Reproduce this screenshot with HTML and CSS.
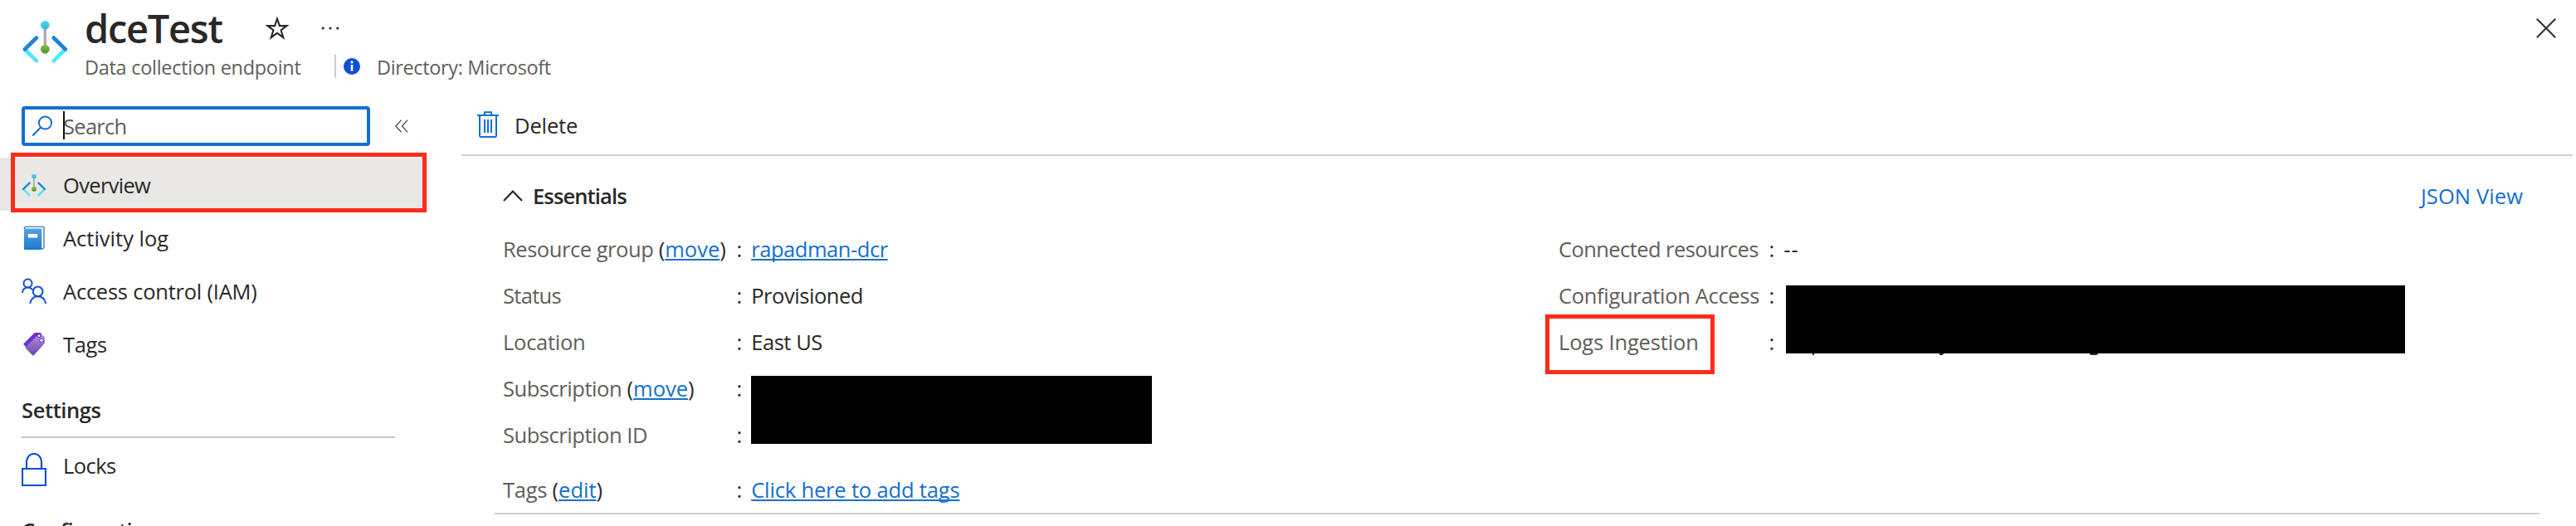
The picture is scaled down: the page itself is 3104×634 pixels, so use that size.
FILE: index.html
```
<!DOCTYPE html>
<html lang="en">
<head>
<meta charset="utf-8">
<title>dceTest</title>
<link rel="stylesheet" href="styles.css">
</head>
<body>
<svg class="defs" aria-hidden="true">
  <defs>
    <linearGradient id="cyan" x1="0" y1="0" x2="0" y2="1"><stop offset="0" stop-color="#4ad6f2"/><stop offset="1" stop-color="#3cb8dc"/></linearGradient>
    <linearGradient id="green" x1="0" y1="0" x2="0" y2="1"><stop offset="0" stop-color="#7cc43e"/><stop offset="1" stop-color="#53912d"/></linearGradient>
    <linearGradient id="book" x1="0" y1="0" x2="0" y2="1"><stop offset="0" stop-color="#4fa3ea"/><stop offset="1" stop-color="#1f78ce"/></linearGradient>
    <linearGradient id="tag" x1="0" y1="0" x2="0" y2="1"><stop offset="0" stop-color="#b78ae0"/><stop offset="1" stop-color="#6a45a5"/></linearGradient>
    <symbol id="endpoint" viewBox="26 24 56.6 54">
      <path d="M54.3 33v24" stroke="#adadad" stroke-width="3.4"/>
      <path d="M44 73.3 30 59.5M64.6 73.3l14-13.8" stroke="#50e6ff" stroke-width="4.6" stroke-linecap="round"/>
      <path d="M44 45.5 29.8 59.5M64.6 45.5l14.2 14" stroke="#1f83d9" stroke-width="4.6" stroke-linecap="round"/>
      <circle cx="54.3" cy="30.2" r="5.3" fill="url(#cyan)"/>
      <circle cx="54.3" cy="59.3" r="5.4" fill="url(#green)"/>
    </symbol>
  </defs>
</svg>

<header class="blade-header">
  <svg class="resource-icon"><use href="#endpoint"/></svg>
  <div class="heading">
    <div class="title-row">
      <h1 class="title">dceTest</h1>
      <svg class="star" viewBox="0 0 28 28"><path d="M14 2.6 16.9 11.1H25.4L18.6 16.4 21.3 25.2 14 19.8 6.7 25.2 9.4 16.4 2.6 11.1H11.1Z" fill="none" stroke="#292827" stroke-width="2.1"/></svg>
      <svg class="dots" viewBox="0 0 22 6"><circle cx="2.2" cy="3" r="1.6"/><circle cx="11" cy="3" r="1.6"/><circle cx="19.8" cy="3" r="1.6"/></svg>
    </div>
    <div class="subtitle-row">
      <span class="subtitle kind">Data collection endpoint</span>
      <svg class="info" viewBox="0 0 20 20"><circle cx="10" cy="10" r="10" fill="#0f4fd6"/><path d="M10 8v7.6" stroke="#fff" stroke-width="2.6"/><circle cx="10" cy="4.9" r="1.6" fill="#fff"/></svg>
      <span class="subtitle directory">Directory: Microsoft</span>
    </div>
  </div>
  <svg class="close" viewBox="0 0 24 24"><path d="M.8.8l22.4 22.4M23.2.8.8 23.2" stroke="#323130" stroke-width="2"/></svg>
</header>

<div class="blade">
  <nav class="sidebar">
    <div class="search-row">
      <div class="search">
        <svg class="glass" viewBox="0 0 26 26"><circle cx="16.5" cy="9" r="7.6" fill="none" stroke="#156fd0" stroke-width="2"/><path d="M11.2 14.5 1.2 24.6" stroke="#156fd0" stroke-width="2.2"/></svg>
        <span class="caret"></span>
        <span class="placeholder">Search</span>
      </div>
      <svg class="collapse" viewBox="0 0 16 16"><path d="M7.6.6.9 8l6.7 7.4M15.2.6 8.5 8l6.7 7.4" fill="none" stroke="#4a4846" stroke-width="1.3"/></svg>
    </div>

    <div class="nav-item selected">
      <svg class="nav-icon"><use href="#endpoint"/></svg>
      <span class="nav-label overview">Overview</span>
      <span class="callout callout-nav"></span>
    </div>
    <div class="nav-item">
      <svg class="nav-icon" viewBox="26 271 30 30">
        <path d="M29.2 275.8q0-2.6 2.8-2.6h20q1 0 1 1v24.3l-2.8 2.2" fill="#fff" stroke="#235a94" stroke-width="1.1"/>
        <rect x="29" y="275.4" width="21.2" height="25.6" rx="1" fill="url(#book)"/>
        <rect x="33.8" y="282" width="11.4" height="4.6" rx=".6" fill="#fff"/>
      </svg>
      <span class="nav-label activity">Activity log</span>
    </div>
    <div class="nav-item">
      <svg class="people-icon" viewBox="26 334 30 32">
        <g fill="none" stroke="#0f4fd6" stroke-width="2">
          <circle cx="33.5" cy="341.4" r="5"/>
          <path d="M26.900 353q.700-6.400 6.600-6.400 3.600 0 5.400 2.500"/>
          <circle cx="45.600" cy="351.400" r="5.800"/>
          <path d="M36.300 366c1-5.800 4.600-8.700 9.300-8.700s8.500 2.900 9.500 8.700"/>
        </g>
      </svg>
      <span class="nav-label access">Access control (IAM)</span>
    </div>
    <div class="nav-item">
      <svg class="nav-icon" viewBox="26 399 30 30">
        <path d="M28 414.800 40.500 402.200q1.200-1.200 2.800-1.200h4.600q1.800 0 2.200 1.900l.7 4-18.500 12.600Z" fill="#6b30cf"/>
        <path d="M30.800 418.600 44.600 404.800q1-.9 2.300-.8l5 .6q1.500.2 1.700 1.700l.4 5.600q.1 1.700-1 2.900L41 428q-1.100 1.100-2.100 0l-7.600-7.700q-1-.9-.5-1.700Z" fill="url(#tag)"/>
        <circle cx="47" cy="404.700" r="1.900" fill="#fff" stroke="#4c1f96"/>
        <circle cx="50" cy="410.300" r="2.200" fill="#fff" stroke="#5a2da8"/>
      </svg>
      <span class="nav-label tags">Tags</span>
    </div>

    <h2 class="group settings">Settings</h2>
    <div class="nav-item">
      <svg class="lock-icon" viewBox="0 0 30 40"><path d="M1 19h28v20H1zM6 19V10.500a9 9.500 0 0 1 18 0V19" fill="none" stroke="#0f4fd6" stroke-width="2.200"/></svg>
      <span class="nav-label locks">Locks</span>
    </div>
    <h2 class="group configuration">Configuration</h2>
  </nav>

  <main class="content">
    <div class="toolbar">
      <svg class="trash" viewBox="0 0 26 32"><path d="M0 5h26M9 5V1.200h8V5M3 5v24.500q0 1.400 1.400 1.400h17.200q1.400 0 1.400-1.400V5M9 10v16M13 10v16M17 10v16" fill="none" stroke="#156fd0" stroke-width="2"/></svg>
      <span class="delete">Delete</span>
    </div>

    <section class="essentials">
      <div class="essentials-head">
        <svg class="chevron" viewBox="0 0 24 14"><path d="M1 13 12 1.600 23 13" fill="none" stroke="#292827" stroke-width="2.200"/></svg>
        <h2 class="essentials-title">Essentials</h2>
        <a class="json">JSON View</a>
      </div>

      <div class="columns">
        <div class="column left">
          <div class="prop"><span class="key"><span class="wide">Resource group</span> <i>(<a>move</a>)</i></span><i>:</i><a class="value wide group-link">rapadman-dcr</a></div>
          <div class="prop"><span class="key status">Status</span><i>:</i><span class="value wide">Provisioned</span></div>
          <div class="prop"><span class="key">Location</span><i>:</i><span class="value wide">East US</span></div>
          <div class="prop"><span class="key"><span class="wide">Subscription</span> <i>(<a>move</a>)</i></span><i>:</i><span class="value"><span class="mask mask-left"></span></span></div>
          <div class="prop"><span class="key wide">Subscription ID</span><i>:</i><span class="value"></span></div>
          <div class="prop tags-prop"><span class="key">Tags <i>(<a>edit</a>)</i></span><i>:</i><a class="value add-tags">Click here to add tags</a></div>
        </div>
        <div class="column right">
          <div class="prop"><span class="key connected">Connected resources</span><i>:</i><span class="value dashes">--</span></div>
          <div class="prop"><span class="key config-access">Configuration Access</span><i>:</i><span class="value"><span class="mask mask-right"><b class="speck speck-1"></b><b class="speck speck-2"></b><b class="speck speck-3"></b></span></span></div>
          <div class="prop"><span class="key ingestion">Logs Ingestion<span class="callout callout-logs"></span></span><i>:</i><span class="value"></span></div>
        </div>
      </div>
    </section>
  </main>
</div>
</body>
</html>
```
FILE: styles.css
```
* { box-sizing: border-box; }
body {
  margin: 0;
  height: 634px;
  overflow: hidden;
  background: #fff;
  color: #292827;
  font: 25.5px/30px "Open Sans", "Noto Sans", sans-serif;
}
h1, h2 { margin: 0; font-weight: 600; }
i { font-style: normal; }
a { color: #156fd0; }
svg { display: block; flex: none; }
.defs { position: absolute; width: 0; height: 0; }

/* Header */
.blade-header { display: flex; height: 128px; padding-left: 26px; }
.resource-icon { width: 56.6px; height: 54px; margin: 24px 19.4px 0 0; }
.title-row { display: flex; align-items: center; height: 68px; }
.title { width: 218px; margin-top: -1px; font-size: 47px; line-height: 60px; letter-spacing: -1.3px; }
.star { width: 28px; height: 28px; margin-right: 39px; }
.dots { width: 22px; height: 6px; fill: #292827; }
.subtitle-row { display: flex; align-items: center; height: 28px; margin-top: -2px; }
.subtitle { font-size: 23.5px; color: #605e5c; }
.kind { width: 303px; height: 28px; line-height: 31px; border-right: 2px solid #d0cece; letter-spacing: -.29px; }
.info { width: 20px; height: 20px; margin: 0 20px 0 9px; }
.directory { padding-top: 2px; letter-spacing: -.35px; }
.close { width: 24px; height: 24px; margin: 22px 24px 0 auto; }

/* Sidebar */
.blade { display: flex; }
.sidebar { width: 516px; margin-right: 40px; flex: none; }
.search-row { display: flex; align-items: center; height: 48px; margin: 0 0 14px 26px; }
.search { display: flex; align-items: center; width: 420px; height: 48px; border: 4px solid #156fd0; border-radius: 4px; padding-left: 8px; }
.glass { width: 26px; height: 26px; }
.caret { width: 2px; height: 34px; margin: -2px 0 0 12px; background: #111; }
.placeholder { margin-left: -2px; color: #605e5c; letter-spacing: -.71px; }
.collapse { width: 16px; height: 16px; margin-left: 30px; }
.nav-item { position: relative; display: flex; align-items: center; height: 64px; padding-left: 26px; }
.selected { background: #e9e8e6; }
.nav-icon { width: 30px; height: 30px; }
.people-icon { width: 30px; height: 32px; }
.selected .nav-icon { height: 29px; margin-top: 2px; }
.nav-label { margin-left: 20px; padding-top: 2px; }
.overview { letter-spacing: -.67px; }
.access { letter-spacing: -.23px; }
.tags { letter-spacing: -.34px; }
.locks { letter-spacing: -.55px; }
.lock-icon { width: 30px; height: 40px; margin-top: 12px; }
.group { margin-left: 26px; font-size: 25.5px; letter-spacing: -.39px; }
.settings { width: 450px; height: 82px; padding-top: 33px; border-bottom: 2px solid #c8c6c4; }
.configuration { padding-top: 32px; }
.callout { position: absolute; border: 5px solid #ff2b1c; }
.callout-nav { left: 13px; top: -6px; width: 501px; height: 72px; }

/* Content */
.content { flex: 1; min-width: 0; }
.toolbar { display: flex; height: 60px; margin-right: 4px; padding: 6px 0 0 19px; border-bottom: 2px solid #d0cece; }
.trash { width: 26px; height: 32px; margin-right: 19px; }
.delete { padding-top: 2px; letter-spacing: -.12px; }
.essentials { width: 2464px; height: 432px; margin-left: 40px; border-bottom: 2px solid #d0cece; }
.essentials-head { display: flex; align-items: center; height: 84px; padding: 12px 20px 0 10px; }
.chevron { width: 24px; height: 14px; }
.essentials-title { margin-left: 12px; font-size: 25.5px; letter-spacing: -.88px; }
.json { margin-left: auto; letter-spacing: .1px; }
.columns { display: flex; padding-left: 10px; }
.left { width: 1272px; }
.prop { position: relative; display: flex; height: 56px; line-height: 56px; white-space: nowrap; }
.tags-prop { margin-top: 10px; }
.left .key { width: 281.500px; }
.right .key { width: 253.500px; }
.key { position: relative; color: #605e5c; letter-spacing: -.26px; }
.key i { color: #292827; letter-spacing: 0; }
.key a, a.value { text-decoration: underline 2px; text-underline-offset: 2px; text-decoration-skip-ink: none; }
.value { position: relative; margin-left: 11px; }
.wide { letter-spacing: -.45px; }
.status { letter-spacing: -.68px; }
.add-tags { letter-spacing: -.16px; }
.connected { letter-spacing: -.58px; }
.config-access { letter-spacing: -.32px; }
.ingestion { letter-spacing: -.16px; }
.dashes { letter-spacing: 1px; }
.mask { position: absolute; background: #000; }
.mask-left { left: 0; top: 13px; width: 483px; height: 82px; }
.mask-right { left: 3px; top: 16px; width: 746px; height: 82px; }
.speck { position: absolute; top: 82px; height: 2px; background: #292827; }
.speck-1 { left: 32px; width: 2px; }
.speck-2 { left: 185px; width: 5px; border-radius: 0 0 3px 1px; }
.speck-3 { left: 366px; width: 10px; border-radius: 0 0 5px 5px; }
.callout-logs { left: -16px; top: -5px; width: 204px; height: 72px; }
```
